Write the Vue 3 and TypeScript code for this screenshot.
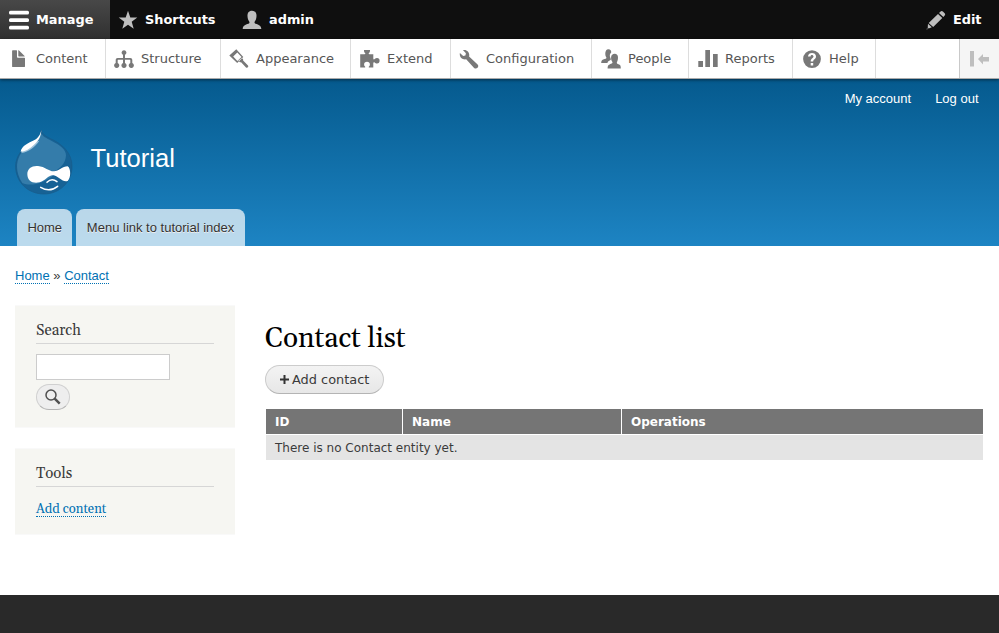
<script setup lang="ts">
interface IconShape {
  d: string
  evenodd?: boolean
}

interface ToolbarItem {
  label: string
  icon: IconShape
  width: number
}

const adminItems: ToolbarItem[] = [
  { label: 'Content', width: 106, icon: { d: 'M3.8 1.2h3.7c.3 0 .5.2.5.5v6.2c0 .5.2.8.8.8h6.6c.4 0 .6.2.6.6v8.200c0 .3-.2.5-.5.5H3.8c-.4 0-.7-.2-.7-.6V1.800c0-.4.3-.6.7-.6zM9.300 1.500c0-.4.2-.5.500-.2l5.800 5.600c.3.3.2.5-.2.5H9.900c-.4 0-.6-.2-.6-.6z' } },
  { label: 'Structure', width: 115, icon: { d: 'M10 1.300a2.300 2.300 0 0 1 1 4.400V9h5.300c1.200 0 2 .8 2 2v2.900a2.600 2.600 0 1 1-2 0V11.300c0-.3-.1-.5-.4-.5H11v3.100a2.600 2.600 0 1 1-2 0v-3.100H4.100c-.3 0-.4.2-.4.5v2.600a2.600 2.600 0 1 1-2 0V11c0-1.200.8-2 2-2H9V5.700A2.300 2.300 0 0 1 10 1.300z' } },
  { label: 'Appearance', width: 130, icon: { d: 'M7.300.3 14.300 7.900 8.200 13.900.3 6.400zM8.300 3.400 4.200 7.500l4.200 4.400 4.100-4zM12.800 9l1.300 1.300v1.200l4.900 5c1 1.300-.8 3-2 2l-4.900-5.300H11l-1.600-1.500z', evenodd: true } },
  { label: 'Extend', width: 100, icon: { d: 'M.2 5.300h4.300c1 0 1-.7.6-1.200C4.600 3.500 4 3 4 1.700V.9h6v.8c0 1.300-.6 1.800-1.100 2.400-.4.500-.4 1.200.6 1.200h3.800v4.200c0 1.100.8 1.200 1.400.6.700-.7 1.300-1 2.300-1 1.800 0 2.600 1.100 2.600 2.700s-.8 2.700-2.600 2.700c-1 0-1.600-.3-2.300-1-.6-.6-1.400-.5-1.400.6v4.500H9.400c-.8 0-.8-.5-.4-1 .6-.6.9-1.300.9-2.200 0-1.600-1.100-2.600-2.900-2.600s-2.900 1-2.900 2.600c0 .9.3 1.600.9 2.200.4.5.4 1-.4 1H.2z' } },
  { label: 'Configuration', width: 141, icon: { d: 'M3.900 1.100C8.100.1 11 3.600 10.100 7.500l8.500 8c2.100 2.300-1.300 5.600-3.500 3.400L7.200 10.300C3 11 .1 7.800.9 3.900l3.300 3.200 2.200-.7.5-2.200z' } },
  { label: 'People', width: 97, icon: { d: 'M7.300.3c2.200 0 3.100 1.300 2.900 3.300-1.700 1.400-1.700 3.400-.8 5.500.9 1.500.4 2.100-1.200 2.700-.9.400-1.500 1.200-1.800 2.100H.2c.1-1.900.5-3 2-3.500 2.200-.6 3.400-.9 3.200-2C3.800 6.800 3.600.3 7.300.3zM13.700 4.700c4.200 0 3.700 5.400 2.400 8-.9 1.700.1 2.200 2 2.700 1.400.4 1.700 1.800 1.700 4.100H6.600c0-2.600.5-3.600 2-4.100 2.200-.7 3.600-1.100 2.500-2.800-1.500-2.400-1.800-7.900 2.600-7.900z' } },
  { label: 'Reports', width: 104, icon: { d: 'M.3 12h4.700v6H.3zM7.300 1h4.700v17H7.300zM15 5h4.700v13H15z' } },
  { label: 'Help', width: 83, icon: { d: 'M10 1.200a8.900 8.900 0 1 1 0 17.800 8.900 8.900 0 0 1 0-17.800zM8.700 12.500h2.500c-.1-2.300 2.800-2.300 2.800-5 0-4.600-8-4.600-8 0h2.600c0-2.100 2.900-1.900 2.900.1 0 1.600-2.900 2.200-2.800 4.900zM8.700 14h2.500v2.500H8.700z', evenodd: true } },
]

const columns: string[] = ['ID', 'Name', 'Operations']
const accountLinks: string[] = ['My account', 'Log out']
const menuLinks: string[] = ['Home', 'Menu link to tutorial index']
</script>

<template>
  <div class="page">
    <nav class="bar">
      <a class="bar-item active">
        <svg class="icon" viewBox="0 0 20 20" fill="#fff"><rect x="0" y="0.700" width="20" height="3.700" rx="1.500" /><rect x="0" y="8.200" width="20" height="3.700" rx="1.500" /><rect x="0" y="15.700" width="20" height="3.700" rx="1.500" /></svg>
        Manage
      </a>
      <a class="bar-item">
        <svg class="icon" viewBox="0 0 20 20" fill="#bebebe"><path d="M10 .7l2.300 6.700h7l-5.600 4.300 2 7.100L10 14.700l-5.700 4.100 2-7.100L.7 7.400h7z" /></svg>
        Shortcuts
      </a>
      <a class="bar-item">
        <svg class="icon" viewBox="0 0 20 20" fill="#bebebe"><path d="M10 .7c5 0 5 5.200 4 8.500-.5 1.500-1.500 2.300-1.500 3.300 0 2 6.900 1.400 6.800 6.400H.7c-.1-5 6.800-4.400 6.800-6.400 0-1-1-1.800-1.500-3.300C5 5.900 5 .7 10 .7z" /></svg>
        admin
      </a>
      <a class="bar-item edit">
        <svg class="icon" viewBox="0 0 20 20" fill="#bebebe"><path d="M14.300 1.800c1-1 1.700-1 2.600-.2l1.700 1.700c.8.800.8 1.500-.1 2.400l-1.200 1.200L13 3zM12 4l4.300 4.100-9.100 8.800-4.500-4zM2 13.800l3.800 3.500-3.100 1.300-1-.9zM1 18.300l.9.800-1.400.3z" /></svg>
        Edit
      </a>
    </nav>

    <nav class="tray">
      <a v-for="item in adminItems" :key="item.label" class="tray-item" :style="{ width: item.width + 'px' }">
        <svg class="icon" viewBox="0 0 20 20" fill="#787878"><path :d="item.icon.d" :fill-rule="item.icon.evenodd ? 'evenodd' : 'nonzero'" /></svg>
        {{ item.label }}
      </a>
      <button class="orientation" aria-label="Vertical orientation">
        <svg viewBox="0 0 20 16" fill="#bebebe"><path d="M1 0h4v15.500H1zM9 8l5-5v3h6v4.500h-6v3z" /></svg>
      </button>
    </nav>

    <header class="header">
      <div class="account"><a v-for="link in accountLinks" :key="link">{{ link }}</a></div>
      <div class="branding">
        <svg class="logo" viewBox="21 15 174 198">
          <path fill="#176295" stroke="#185b88" stroke-width="2" d="M100 18C102 30 112 36 125 43C165 60 192 88 192 127C192 175 154 210 108 210C60 210 23 175 23 127C23 98 41 74 65 60C82 51 97 40 100 18Z" />
          <path fill="#347caa" d="M100 28C104 38 115 43 130 50C156 63 174 76 174 94C173 118 157 132 142 141L131 158C107 174 72 190 43 177C17 139 24 96 56 68C80 54 96 48 100 28Z" />
          <path fill="#9dc3dc" d="M40 87C45 67 65 57 94 50C82 68 63 84 40 87Z" />
          <path fill="#fff" d="M100 18C99 38 94 48 78 62C64 75 51 83 38 83C41 65 62 57 78 49C91 42 97 32 100 18Z" />
          <path fill="#fff" d="M58 150C58 133 73 124 90 126C111 128 122 142 137 142C151 143 163 127 179 127C189 133 189 163 179 171C165 177 151 157 137 154C122 151 113 170 95 175C73 180 58 170 58 150Z" />
          <path fill="none" stroke="#fff" stroke-width="4.500" stroke-linecap="round" d="M117 175Q131 161 147 173M98 190Q125 206 149 187" />
        </svg>
        <span class="site-name">Tutorial</span>
      </div>
      <nav class="menu"><a v-for="link in menuLinks" :key="link">{{ link }}</a></nav>
    </header>

    <div class="breadcrumb"><a>Home</a> » <a>Contact</a></div>

    <div class="main">
      <aside class="sidebar">
        <section class="block search">
          <h2>Search</h2>
          <input type="text" aria-label="Search">
          <button class="search-button" aria-label="Search">
            <svg viewBox="0 0 16 16" fill="none" stroke="#505050"><circle cx="6" cy="6" r="5" stroke-width="1.500" /><path d="M9.700 9.700l5 5" stroke-width="2.500" /></svg>
          </button>
        </section>
        <section class="block tools">
          <h2>Tools</h2>
          <a>Add content</a>
        </section>
      </aside>
      <main class="content">
        <h1>Contact list</h1>
        <a class="add"><svg viewBox="0 0 9 9" fill="#333"><path d="M3.500 0h2v3.500H9v2H5.500V9h-2V5.500H0v-2h3.500z" /></svg>Add contact</a>
        <table>
          <thead><tr><th v-for="column in columns" :key="column">{{ column }}</th></tr></thead>
          <tbody><tr><td colspan="3">There is no Contact entity yet.</td></tr></tbody>
        </table>
      </main>
    </div>
    <footer class="footer"></footer>
  </div>
</template>

<style>
body { margin: 0; overflow: hidden; background: #fff; }
</style>

<style scoped>
* { box-sizing: border-box; }
.page { display: flex; flex-direction: column; height: 633px; font-family: "Liberation Sans", sans-serif; font-size: 13px; color: #3b3b3b; }
.icon { width: 20px; height: 20px; flex: none; }
.bar { display: flex; flex: none; height: 39px; background: #0f0f0f; color: #fff; font: bold 12.900px "DejaVu Sans", sans-serif; }
.bar-item { display: flex; align-items: center; gap: 7px; padding: 0 17.500px 0 8px; white-space: nowrap; }
.bar-item.active { width: 110px; padding-left: 9px; background: linear-gradient(#484848, #303030); }
.bar-item:nth-child(2) { width: 124px; }
.edit { margin-left: auto; }
.tray { position: relative; z-index: 1; display: flex; flex: none; height: 40px; background: #fff; border-bottom: 1px solid #aaa; box-shadow: 0 1px 3px rgba(0, 0, 0, .5); color: #565656; font: 13px "DejaVu Sans", sans-serif; }
.tray-item { display: flex; align-items: center; gap: 7px; padding-left: 9px; border-right: 1px solid #ddd; white-space: nowrap; flex: none; }
.tray-item:nth-child(2), .tray-item:nth-child(3), .tray-item:nth-child(5) { padding-left: 8px; }
.orientation { display: flex; align-items: center; margin-left: auto; width: 40px; padding: 0 0 0 9px; border: 0; border-left: 1px solid #c9c9c9; background: #f5f5f5; }
.orientation svg { width: 20px; height: 16px; }
.header { display: flex; flex-direction: column; flex: none; height: 167px; background: linear-gradient(#055a8e, #1d84c3); }
.account { display: flex; justify-content: flex-end; gap: 24px; padding: 12px 20.500px 0 0; line-height: 15px; color: #fff; }
.branding { display: flex; padding: 23px 0 0 15px; height: 103px; }
.logo { width: 58px; height: 66px; flex: none; }
.site-name { margin: 14px 0 0 17.500px; font-size: 25.600px; line-height: 31px; color: #fff; }
.menu { display: flex; gap: 4px; padding-left: 17px; height: 37px; }
.menu a { padding: 0 10.400px; line-height: 37px; border-radius: 8px 8px 0 0; background: rgba(255, 255, 255, .7); color: #333; text-shadow: 0 1px #eee; }
.breadcrumb { flex: none; padding: 22px 15px 0; height: 59px; line-height: 15px; }
.breadcrumb a, .tools a { color: #0071b3; border-bottom: 1px dotted #0071b3; }
.main { display: flex; gap: 30px; flex: none; height: 290px; padding: 0 15px; }
.sidebar { width: 220px; flex: none; display: flex; flex-direction: column; gap: 20px; }
.block { padding: 16px 21px; background: #f6f6f2; border: 1px solid #f9f9f9; border-width: 1px 0; font-family: Gelasio, Georgia, "Liberation Serif", serif; }
.search { height: 123px; }
.tools { height: 87px; font-size: 13px; }
h2 { margin: 0; height: 22px; border-bottom: 1px solid #d6d6d6; font-size: 15px; font-weight: 400; line-height: 18px; color: #3b3b3b; }
input { display: block; width: 134px; height: 26px; margin: 10px 0 4px; border: 1px solid #ccc; background: #fff; padding: 2px; }
.search-button { display: flex; align-items: center; justify-content: center; width: 34px; height: 26px; padding: 0 1px 0 0; border: 1px solid #d0d0d0; border-bottom-color: #b4b4b4; border-radius: 13px; background: #eee; }
.search-button svg { width: 16px; height: 16px; }
.tools a { display: inline-block; margin-top: 15px; line-height: 14px; }
.content { width: 719px; }
h1 { margin: 17px 0 0; font-family: Gelasio, Georgia, "Liberation Serif", serif; font-size: 28px; line-height: 34px; font-weight: 400; color: #000; }
.add { display: flex; align-items: center; width: 119px; height: 29px; margin-top: 9px; padding-left: 13.500px; border: 1px solid #ccc; border-bottom-color: #b4b4b4; border-radius: 15px; background: linear-gradient(#f3f3f3, #e7e7e7); font: 12.900px "DejaVu Sans", sans-serif; color: #3a3a3a; white-space: nowrap; }
.add svg { width: 9px; height: 9px; margin-right: 3.500px; }
table { width: 719px; margin: 14px 0 0; border-spacing: 1px; border-collapse: separate; table-layout: fixed; font: 12px "DejaVu Sans", sans-serif; }
th { height: 25px; padding: 0 9px; background: #757575; color: #fff; text-align: left; }
th:nth-child(1) { width: 136px; }
th:nth-child(2) { width: 218px; }
td { height: 25px; padding: 0 9px; background: #e4e4e4; }
.footer { flex: 1; background: #292929; }
</style>
